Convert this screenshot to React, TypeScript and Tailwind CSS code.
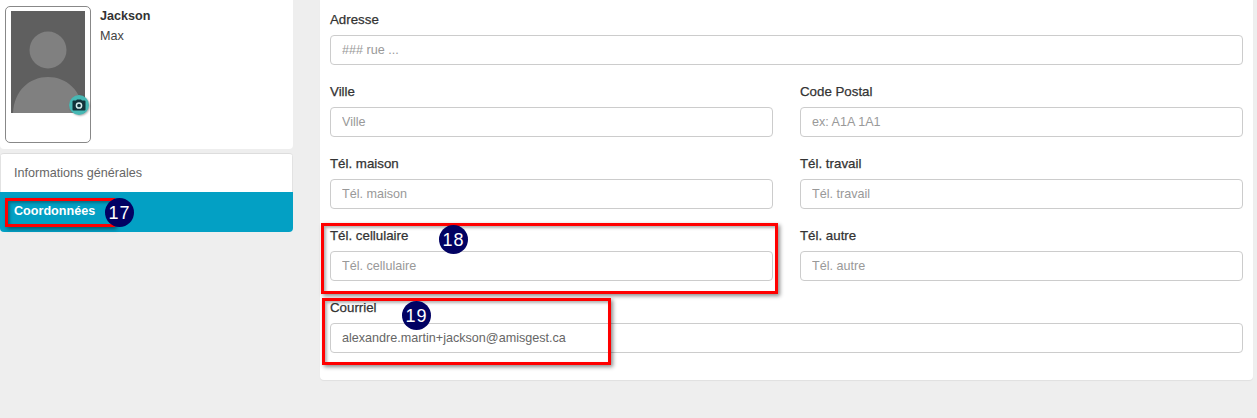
const font = "[font-family:'Liberation_Sans',Arial,sans-serif]";

function Field({ label, placeholder, value }: { label: string; placeholder: string; value?: string }) {
  return (
    <div className="flex min-w-0 flex-1 flex-col">
      <label className="mb-[5px] h-[20px] text-[13.3px] leading-[20px] text-[#333] [-webkit-text-stroke:0.25px_#333]">
        {label}
      </label>
      <input
        readOnly
        placeholder={placeholder}
        value={value ?? ""}
        className="h-[30px] w-full rounded-[4px] border border-[#ccc] bg-white px-[11px] text-[12.6px] text-[#666] placeholder:text-[#999]"
      />
    </div>
  );
}

function Badge({ n, className }: { n: number; className: string }) {
  return (
    <div
      className={`absolute flex size-[29px] items-center justify-center rounded-full bg-[#020263] text-[18px] leading-none tracking-[1px] text-white ${className}`}
    >
      {n}
    </div>
  );
}

function Highlight({ className }: { className: string }) {
  return (
    <div
      className={`absolute border-[3px] border-[#f00] shadow-[2px_2px_4px_rgba(0,0,0,0.45),inset_2px_2px_3px_rgba(0,0,0,0.3)] ${className}`}
    />
  );
}

export default function App() {
  return (
    <div className={`relative h-[418px] w-[1257px] overflow-hidden bg-[#eeeeee] ${font}`}>
      <div className="flex items-start">
        <aside className="flex w-[293px] flex-col gap-[4px]">
          <section className="flex h-[149px] gap-[9px] rounded-b-[4px] bg-white pl-[5px] pt-[6px]">
            <div className="h-[137px] w-[86px] rounded-[5px] border border-[#888] bg-white pl-[5px] pt-[4px]">
              <div className="relative h-[102px] w-[74px] bg-[#5f5f5f]">
                <svg viewBox="0 0 74 102" className="size-full">
                  <circle cx="37" cy="39" r="18.5" fill="#808080" />
                  <path d="M2 102 C3 79 19 66 37 66 C55 66 71 79 72 102 Z" fill="#808080" />
                </svg>
                <div className="absolute left-[58px] top-[84px] flex size-[20px] items-center justify-center rounded-full bg-[#47b8b4] shadow-[1px_1px_2px_rgba(0,0,0,0.3)]">
                  <svg viewBox="0 0 14 12" className="h-[12px] w-[14px]">
                    <path
                      d="M1.5 1.5 H4 L5 .5 H9 L10 1.5 H12.5 A1 1 0 0 1 13.5 2.5 V10.5 A1 1 0 0 1 12.5 11.5 H1.5 A1 1 0 0 1 .5 10.5 V2.5 A1 1 0 0 1 1.5 1.5 Z"
                      fill="#11333a"
                    />
                    <circle cx="7" cy="6.5" r="2.6" fill="none" stroke="#d7f0f0" strokeWidth="1.5" />
                  </svg>
                </div>
              </div>
            </div>
            <div className="text-[12.6px] leading-[20px]">
              <div className="font-bold text-[#333]">Jackson</div>
              <div className="text-[#444]">Max</div>
            </div>
          </section>
          <nav className="overflow-hidden rounded-[4px] border-t border-[#ddd] bg-white text-[12.6px]">
            <div className="flex h-[38px] items-center border-x border-[#e2e2e2] px-[13px] text-[#666]">Informations générales</div>
            <div className="flex h-[40px] items-center bg-[#03a0c4] px-[14px] pb-[1px] font-bold text-white">Coordonnées</div>
          </nav>
        </aside>
        <main className="ml-[27px] flex h-[380px] w-[933px] flex-col gap-[17px] rounded-b-[4px] bg-white px-[10px] pt-[10px] shadow-[0_1px_1px_rgba(0,0,0,0.06)]">
          <div className="flex">
            <Field label="Adresse" placeholder="### rue ..." />
          </div>
          <div className="flex gap-[27px]">
            <Field label="Ville" placeholder="Ville" />
            <Field label="Code Postal" placeholder="ex: A1A 1A1" />
          </div>
          <div className="flex gap-[27px]">
            <Field label="Tél. maison" placeholder="Tél. maison" />
            <Field label="Tél. travail" placeholder="Tél. travail" />
          </div>
          <div className="flex gap-[27px]">
            <Field label="Tél. cellulaire" placeholder="Tél. cellulaire" />
            <Field label="Tél. autre" placeholder="Tél. autre" />
          </div>
          <div className="flex">
            <Field label="Courriel" placeholder="Courriel" value="alexandre.martin+jackson@amisgest.ca" />
          </div>
        </main>
      </div>

      <Highlight className="left-[5px] top-[198px] h-[29px] w-[110px]" />
      <Highlight className="left-[321px] top-[223px] h-[71px] w-[457px]" />
      <Highlight className="left-[322px] top-[298px] h-[67px] w-[289px]" />
      <Badge n={17} className="left-[105px] top-[198px]" />
      <Badge n={18} className="left-[439px] top-[225px]" />
      <Badge n={19} className="left-[402px] top-[301px]" />
    </div>
  );
}
